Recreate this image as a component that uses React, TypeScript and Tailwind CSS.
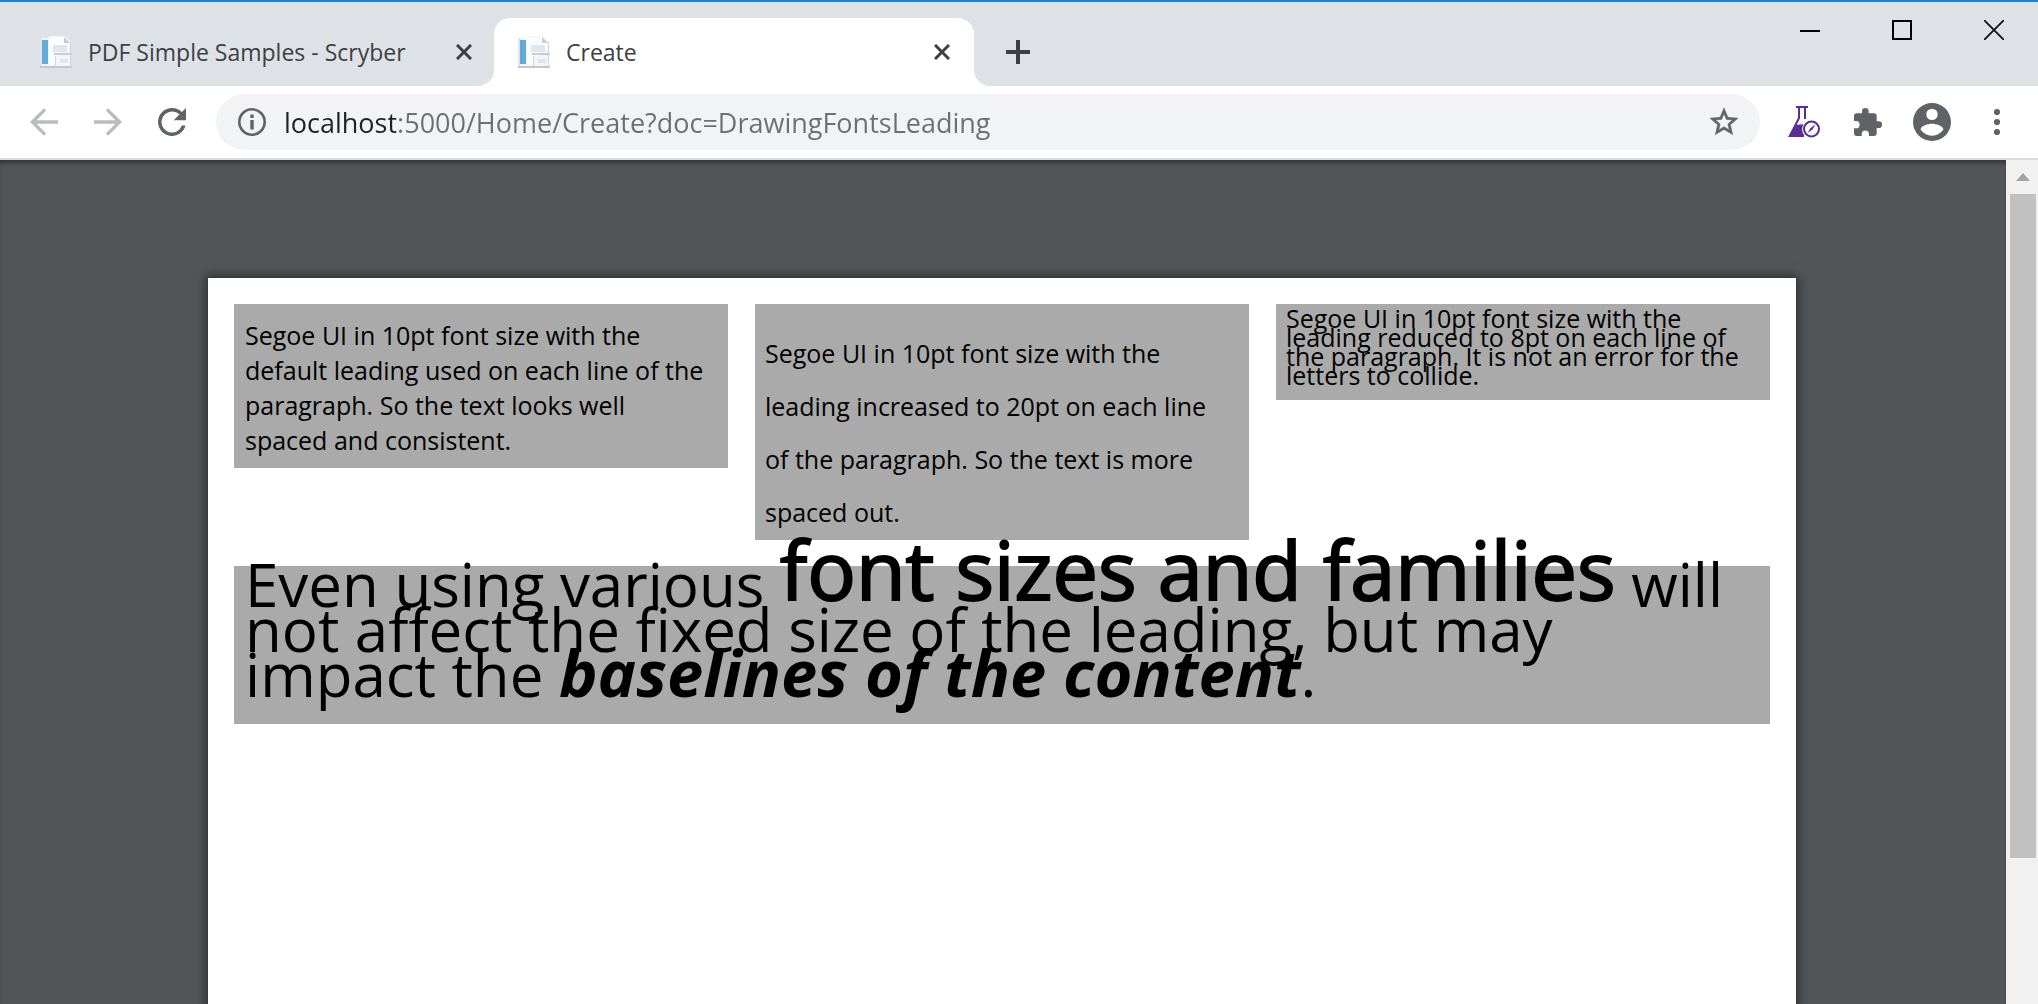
import React from 'react';

function PageIcon() {
  return (
    <svg viewBox="0 0 32 32" className="size-8 shrink-0" aria-hidden="true">
      <path d="M0 2h9V0h16l6 5v26H0z" fill="#f1f3f6" />
      <path d="M0 30h32v2H0z" fill="#c3c7cc" />
      <path d="M0 2h2v28H0z" fill="#e0e4e8" />
      <rect x="2" y="4" width="6" height="24" fill="#63abd9" />
      <path d="M9 1h15l5 5v10H19v13H9z" fill="#fbfcfd" />
      <path d="M24 1l6 6h-6z" fill="#c9ccd1" />
      <rect x="13" y="9" width="14" height="7" fill="#e2e5eb" />
      <rect x="14" y="17" width="18" height="2" fill="#c9ccd1" />
      <rect x="16" y="20" width="15" height="10" fill="#f3f5fa" />
      <rect x="20" y="23" width="8" height="4" fill="#dfe4ee" />
      <path d="M30 6h1v25h-1zM15 20h1v10h-1z" fill="#d3d6db" />
    </svg>
  );
}

function CloseIcon() {
  return (
    <svg viewBox="0 0 16 16" className="size-4" aria-hidden="true">
      <path d="M1 1l14 14M15 1L1 15" stroke="#3c4043" strokeWidth="3" />
    </svg>
  );
}

function TabStrip() {
  return (
    <header className="flex h-[86px] shrink-0 border-t-2 border-[#1883d7] bg-[#dee1e6]">
      <div role="tablist" className="flex items-end">
        <div className="flex h-[68px] w-[494px] items-center pr-[22px] pl-10">
          <button role="tab" aria-selected="false" className="flex flex-1 items-center gap-4 text-left">
            <PageIcon />
            <span className="text-[23px] leading-8 text-[#3c4043]">PDF Simple Samples - Scryber</span>
          </button>
          <button aria-label="Close PDF Simple Samples">
            <CloseIcon />
          </button>
        </div>
        <div className="relative flex h-[68px] w-[480px] items-center rounded-t-2xl bg-white px-6">
          <svg viewBox="0 0 16 16" className="absolute bottom-0 -left-4 size-4" aria-hidden="true">
            <path d="M16 0v16H0A16 16 0 0 0 16 0z" fill="#fff" />
          </svg>
          <svg viewBox="0 0 16 16" className="absolute -right-4 bottom-0 size-4" aria-hidden="true">
            <path d="M0 0v16h16A16 16 0 0 1 0 0z" fill="#fff" />
          </svg>
          <button role="tab" aria-selected="true" className="flex flex-1 items-center gap-4 text-left">
            <PageIcon />
            <span className="text-[23px] leading-8 text-[#3c4043]">Create</span>
          </button>
          <button aria-label="Close Create">
            <CloseIcon />
          </button>
        </div>
      </div>
      <button aria-label="New tab" className="ml-8 self-end pb-[22px]">
        <svg viewBox="0 0 24 24" className="size-6" aria-hidden="true">
          <path d="M12 0v24M0 12h24" stroke="#3c4043" strokeWidth="4" />
        </svg>
      </button>
      <div className="ml-auto flex items-start gap-[72px] pt-[18px] pr-[34px]">
        <button aria-label="Minimize">
          <svg viewBox="0 0 20 20" className="size-5" aria-hidden="true">
            <path d="M0 11h20" stroke="#000" strokeWidth="2" />
          </svg>
        </button>
        <button aria-label="Maximize">
          <svg viewBox="0 0 20 20" className="size-5" aria-hidden="true">
            <rect x="1" y="1" width="18" height="18" fill="none" stroke="#000" strokeWidth="2" />
          </svg>
        </button>
        <button aria-label="Close window">
          <svg viewBox="0 0 20 20" className="size-5" aria-hidden="true">
            <path d="M0 0l20 20M20 0L0 20" stroke="#111" strokeWidth="1.8" />
          </svg>
        </button>
      </div>
    </header>
  );
}

function Toolbar() {
  return (
    <nav className="flex h-[74px] shrink-0 items-center border-b-2 border-[#dadce0] bg-white pr-[34px]">
      <div className="flex w-[216px] shrink-0 items-center gap-9 pl-[30px]">
        <button aria-label="Back">
          <svg viewBox="0 0 28 28" className="size-7" aria-hidden="true">
            <path d="M28 14H3M15 1.4L2.4 14 15 26.600" fill="none" stroke="#babcbe" strokeWidth="3.4" />
          </svg>
        </button>
        <button aria-label="Forward">
          <svg viewBox="0 0 28 28" className="size-7" aria-hidden="true">
            <path d="M0 14h25M13 1.400L25.600 14 13 26.600" fill="none" stroke="#babcbe" strokeWidth="3.4" />
          </svg>
        </button>
        <button aria-label="Reload">
          <svg viewBox="4 4 16 16" className="size-7" aria-hidden="true">
            <path
              d="M17.650 6.350A7.960 7.960 0 0 0 12 4a8 8 0 1 0 7.730 10h-2.080A6 6 0 1 1 12 6c1.660 0 3.140.690 4.220 1.780L13 11h7V4z"
              fill="#5f6368"
            />
          </svg>
        </button>
      </div>
      <div className="flex h-14 min-w-0 flex-1 items-center rounded-full bg-[#f1f3f4] px-[22px]">
        <button aria-label="View site information">
          <svg viewBox="0 0 28 28" className="size-7" aria-hidden="true">
            <circle cx="14" cy="14" r="12.700" fill="none" stroke="#5f6368" strokeWidth="2.600" />
            <path d="M14 12v9.500M14 6.500v3.500" stroke="#5f6368" strokeWidth="3.400" />
          </svg>
        </button>
        <input
          type="text"
          aria-label="Address"
          defaultValue="localhost:5000/Home/Create?doc=DrawingFontsLeading"
          className="ml-[18px] h-10 min-w-0 flex-1 bg-linear-to-r from-[#202124] from-[112px] to-[#6b6f73] to-[112px] bg-clip-text pt-[2px] text-[27px] text-transparent outline-none"
        />
        <button aria-label="Bookmark this page">
          <svg viewBox="2 2 20 20" className="size-7" aria-hidden="true">
            <path
              d="M22 9.240l-7.190-.620L12 2 9.190 8.630 2 9.240l5.460 4.730L5.820 21 12 17.270 18.180 21l-1.630-7.030zM12 15.400l-3.760 2.270 1-4.280-3.320-2.880 4.380-.380L12 6.100l1.710 4.040 4.380.380-3.320 2.880 1 4.280z"
              fill="#5f6368"
              stroke="#5f6368"
              strokeWidth="0.4"
            />
          </svg>
        </button>
      </div>
      <div className="flex shrink-0 items-center pl-7">
        <button aria-label="Accessibility extension">
          <svg viewBox="0 0 32 32" className="size-8" aria-hidden="true">
            <path d="M8 1h12M11 2v10L2 30M17 2v11" fill="none" stroke="#5c2d91" strokeWidth="2" />
            <path d="M7 19l10-1-1 13H0z" fill="#5c2d91" />
            <circle cx="23.500" cy="23" r="9.500" fill="#fff" />
            <circle cx="23.500" cy="23" r="7.500" fill="#fff" stroke="#5c2d91" strokeWidth="2" />
            <path d="M19.500 27l3-5 5-3.500-3 5z" fill="#5c2d91" />
          </svg>
        </button>
        <button aria-label="Extensions" className="ml-[34px]">
          <svg viewBox="2 1 21 21" className="size-7" aria-hidden="true">
            <path
              d="M20.500 11H19V7a2 2 0 0 0-2-2h-4V3.500a2.500 2.500 0 0 0-5 0V5H4a2 2 0 0 0-2 2v3.800h1.500a2.700 2.700 0 0 1 0 5.400H2V20a2 2 0 0 0 2 2h3.800v-1.500a2.700 2.700 0 0 1 5.400 0V22H17a2 2 0 0 0 2-2v-4h1.500a2.500 2.500 0 0 0 0-5z"
              fill="#5f6368"
            />
          </svg>
        </button>
        <button aria-label="Profile" className="ml-[31px]">
          <svg viewBox="2 2 20 20" className="size-[38px]" aria-hidden="true">
            <path
              d="M12 2a10 10 0 1 0 0 20 10 10 0 0 0 0-20zm0 3a3 3 0 1 1 0 6 3 3 0 0 1 0-6zm0 14.200a7.200 7.200 0 0 1-6-3.220c.030-1.990 4-3.080 6-3.080 1.990 0 5.970 1.090 6 3.080a7.200 7.200 0 0 1-6 3.220z"
              fill="#5f6368"
            />
          </svg>
        </button>
        <button aria-label="Browser menu" className="ml-[39px]">
          <svg viewBox="0 0 14 28" className="h-7 w-3.5" aria-hidden="true">
            <circle cx="7" cy="4" r="3.100" fill="#5f6368" />
            <circle cx="7" cy="14" r="3.100" fill="#5f6368" />
            <circle cx="7" cy="24" r="3.100" fill="#5f6368" />
          </svg>
        </button>
      </div>
    </nav>
  );
}

function Lines({ lines }: { lines: string[] }) {
  return lines.map((line) => (
    <span key={line} className="block whitespace-nowrap">
      {line}{' '}
    </span>
  ));
}

function PdfPage() {
  return (
    <article className="mx-auto min-h-[1123px] w-full max-w-[1588px] bg-white p-[26px] text-black shadow-[0_0_10px_2px_rgba(0,0,0,0.5)]">
      <div className="grid grid-cols-3 items-start gap-x-[27px] text-[25px]">
        <p className="bg-[#aaaaaa] px-[11px] pt-[14px] pb-[10px] leading-[35px]">
          <Lines
            lines={[
              'Segoe UI in 10pt font size with the',
              'default leading used on each line of the',
              'paragraph. So the text looks well',
              'spaced and consistent.',
            ]}
          />
        </p>
        <p className="bg-[#aaaaaa] px-[10px] pt-[23px] pb-px leading-[53px]">
          <Lines
            lines={[
              'Segoe UI in 10pt font size with the',
              'leading increased to 20pt on each line',
              'of the paragraph. So the text is more',
              'spaced out.',
            ]}
          />
        </p>
        <p className="bg-[#aaaaaa] px-[10px] pt-[5px] pb-[15px] leading-[19px]">
          <Lines
            lines={[
              'Segoe UI in 10pt font size with the',
              'leading reduced to 8pt on each line of',
              'the paragraph. It is not an error for the',
              'letters to collide.',
            ]}
          />
        </p>
      </div>
      <div className="mt-[26px] flow-root bg-[#aaaaaa] px-[11px] pb-[27px]">
        <p className="-mt-1 text-[60px] leading-[45px] whitespace-nowrap">
          Even using various{' '}
          <span className="align-[7px] text-[81px] leading-[0] [-webkit-text-stroke:2px_#000] [stroke-linejoin:round]">
            font sizes and families
          </span>{' '}
          will
          <br />
          not affect the fixed size of the leading, but may
          <br />
          impact the <strong className="text-[65px] leading-[0] font-bold italic">baselines of the content</strong>.
        </p>
      </div>
    </article>
  );
}

function ScrollBar() {
  return (
    <div className="flex w-8 shrink-0 flex-col items-center bg-[#f1f1f1] pl-[2px]">
      <button aria-label="Scroll up" className="flex h-[34px] w-full items-center justify-center">
        <svg viewBox="0 0 14 8" className="h-2 w-3.5" aria-hidden="true">
          <path d="M7 0l7 8H0z" fill="#a3a3a3" />
        </svg>
      </button>
      <div className="h-[78.7%] w-[26px] bg-[#c1c1c1]" />
    </div>
  );
}

export default function App() {
  return (
    <div className="flex h-screen flex-col overflow-hidden bg-white font-['Open_Sans','Noto_Sans',sans-serif]">
      <TabStrip />
      <Toolbar />
      <div className="flex min-h-0 flex-1">
        <main className="min-w-0 flex-1 overflow-hidden bg-[#525659] pt-[118px] pr-[2px] shadow-[inset_0_5px_4px_-2px_#323639]">
          <PdfPage />
        </main>
        <ScrollBar />
      </div>
    </div>
  );
}
